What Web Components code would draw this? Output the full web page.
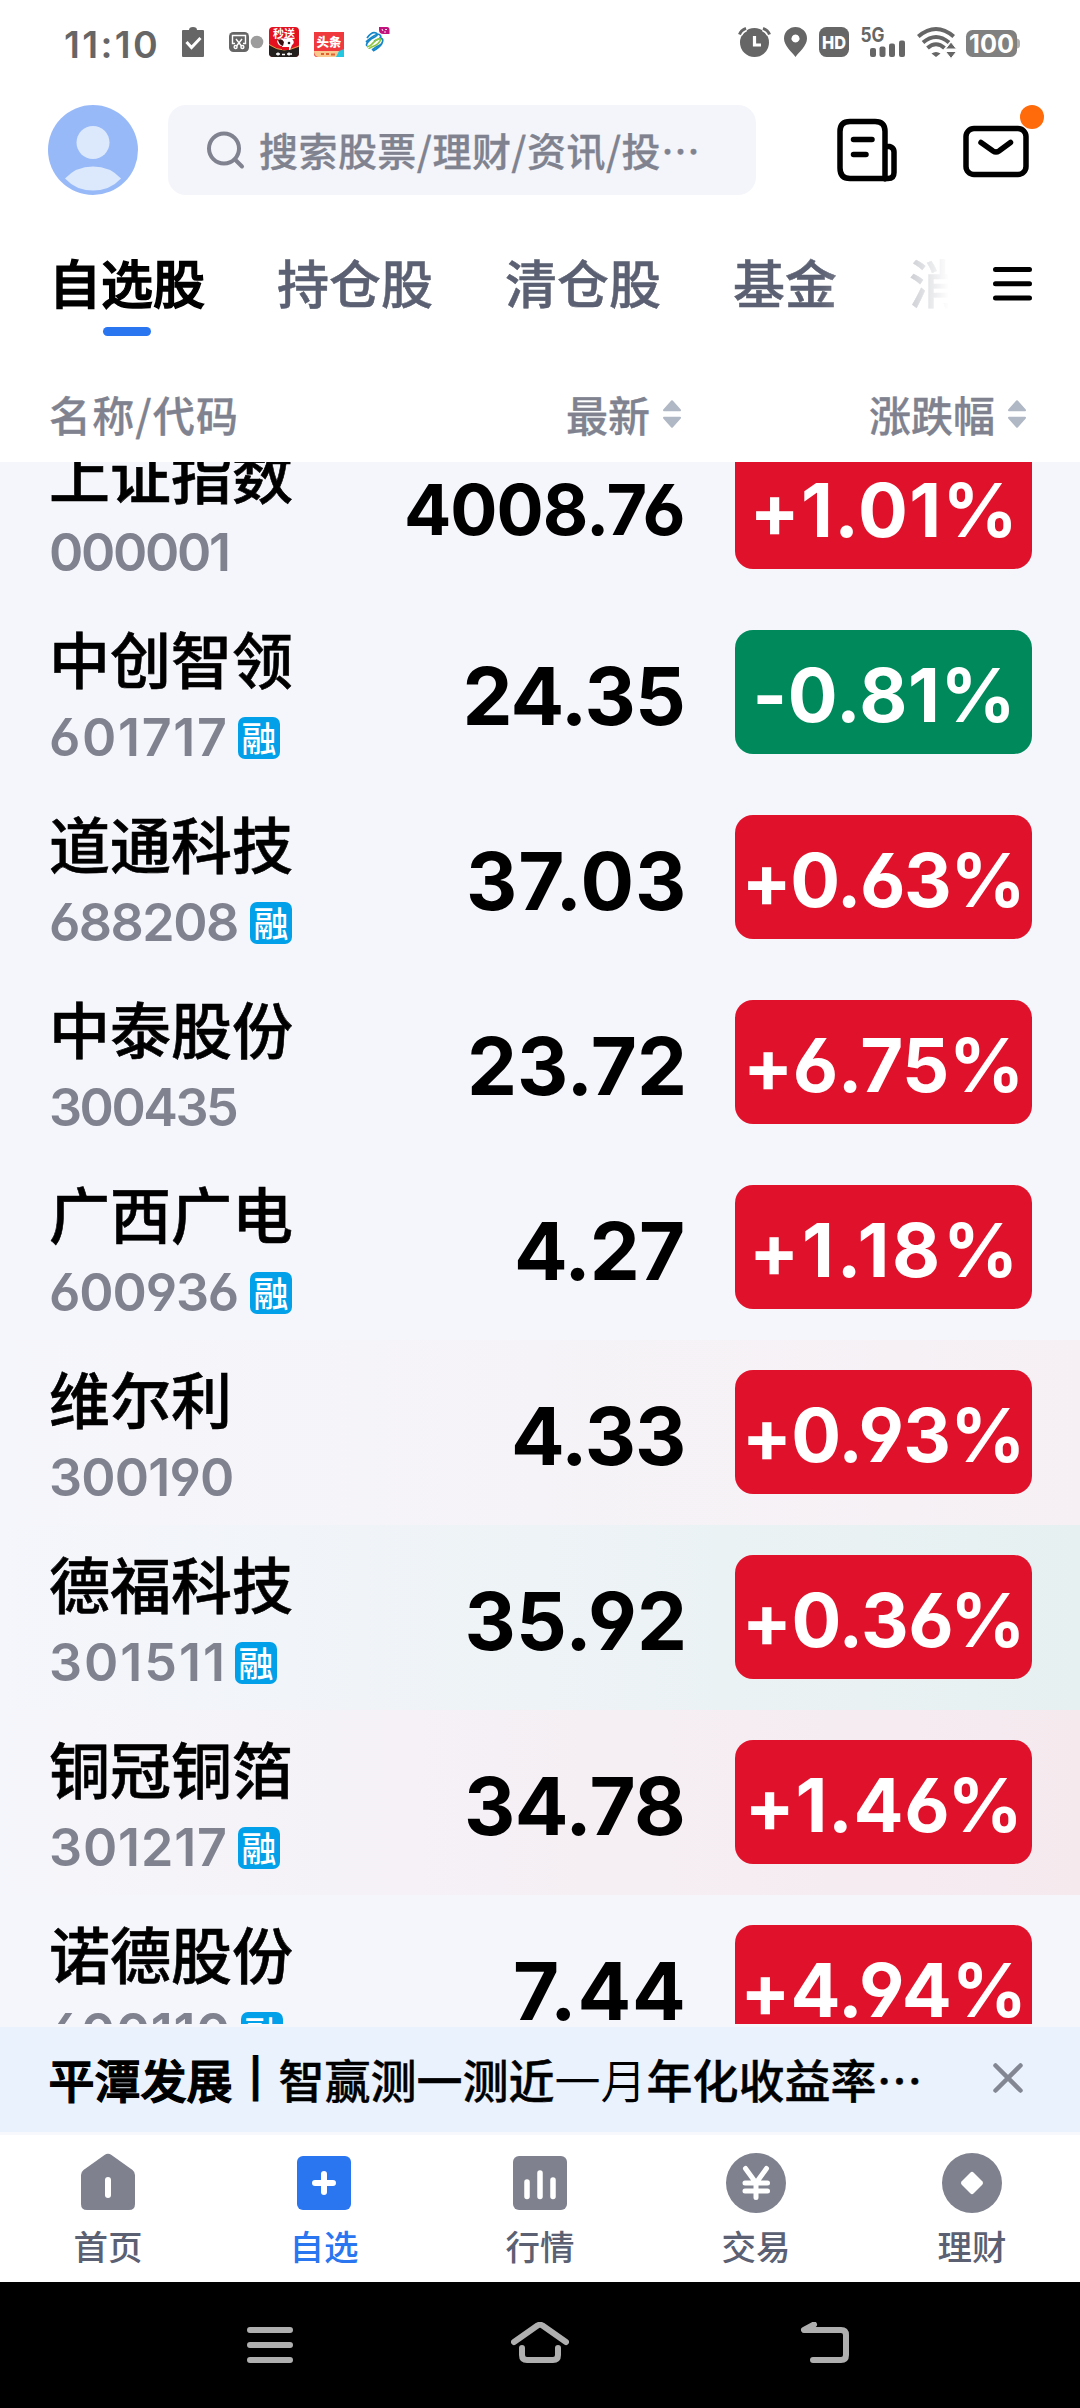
<!DOCTYPE html>
<html lang="zh-CN">
<head>
<meta charset="utf-8">
<title>自选股</title>
<style>
  html, body {
    margin: 0;
    background: #fff;
  }
  body {
    width: 1080px;
    height: 2408px;
    overflow: hidden;
    font-family: "Noto Sans CJK SC", Inter, sans-serif;
    --num: Inter, "Noto Sans CJK SC", sans-serif;
    --grey: #80838f;
    --slate: #5b6072;
    --blue: #2a75f0;
    --page: #f5f6fb;
  }
</style>
</head>
<body>
<stock-app></stock-app>

<script>
// Text whose visible glyphs span exactly `w` pixels: the spare room goes
// into letter-spacing and the side bearings are trimmed with margins.
class InkText extends HTMLElement {
  constructor () {
    super()
    this.attachShadow({ mode: 'open' }).innerHTML = `
      <style>
        :host { display: block; flex: none; white-space: nowrap; width: max-content; }
        span { display: block; width: max-content; }
      </style>
      <span><slot></slot></span>
    `
  }

  connectedCallback () {
    const text = this.textContent
    const span = this.shadowRoot.querySelector('span')
    const target = Number(this.getAttribute('w'))
    const cs = getComputedStyle(this)
    const ctx = document.createElement('canvas').getContext('2d')
    ctx.font = `${cs.fontWeight} ${cs.fontSize} ${cs.fontFamily}`
    const m = ctx.measureText(text)
    const left = -m.actualBoundingBoxLeft
    const right = m.width - m.actualBoundingBoxRight
    const ink = span.getBoundingClientRect().width - left - right
    const gap = (target - ink) / (text.length - 1)
    span.style.letterSpacing = gap + 'px'
    span.style.marginLeft = -left + 'px'
    span.style.marginRight = -(right + gap) + 'px'
  }
}
customElements.define('ink-text', InkText)

class StatusBar extends HTMLElement {
  connectedCallback () {
    this.attachShadow({ mode: 'open' }).innerHTML = `
      <style>
        :host {
          display: flex;
          justify-content: space-between;
          height: 30px;
          padding: 27px 60px 0 65px;
          color: #666;
          font-family: var(--num);
        }
        .side { display: flex; }
        svg { display: block; flex: none; overflow: visible; }
        .clock { font-size: 37.5px; font-weight: 600; line-height: 30px; padding-top: 2.5px; }
      </style>
      <div class="side">
        <ink-text class="clock" w="91">11:10</ink-text>
        <svg style="margin-left:26px" width="22" height="30" viewBox="0 0 22 30">
          <path fill="#666" d="M1 3h6q0-3 4-3t4 3h6q1 0 1 1v25q0 1-1 1H1q-1 0-1-1V4q0-1 1-1z"/>
          <path d="M4.500 15l5 5.500 9-9.500" fill="none" stroke="#fff" stroke-width="3"/>
        </svg>
        <svg style="margin-left:25px" width="35" height="30" viewBox="0 0 35 30">
          <rect y="5" width="20" height="20" rx="4.500" fill="#666"/>
          <g fill="none" stroke="#fff" stroke-width="1.400">
            <path d="M6 16.500H3.500V8.500H16.500V16.500H14"/>
            <path d="M7 12l5.500 7M13 12l-5.500 7"/>
            <circle cx="6.600" cy="20" r="1.500"/><circle cx="13.400" cy="20" r="1.500"/>
          </g>
          <circle cx="28" cy="15" r="6.300" fill="#9c9c9c"/>
        </svg>
        <svg style="margin-left:5px" width="30" height="30" viewBox="0 0 30 30">
          <clipPath id="jd"><rect width="30" height="30" rx="4"/></clipPath>
          <g clip-path="url(#jd)">
            <rect width="30" height="30" fill="#e3101f"/>
            <path d="M0 18q8 5 15 5t15-3v10H0z" fill="#231f1c"/>
            <path d="M0 17.500q8 5.500 15 5.500t15-4" fill="none" stroke="#d9a24c" stroke-width="1"/>
            <path d="M8 14q3-4 8-2q6-3 8 1q2 3-1 5l-2 5h-7l-1-4q-4 0-5-5z" fill="#fff"/>
            <path d="M9 13q4-2 6 2l-1 4q-4-1-5-6z" fill="#3a1012"/>
            <circle cx="20" cy="16" r="1.300" fill="#222"/>
            <path d="M13 20h7v3h-7z" fill="#e3101f"/>
            <path d="M7 27h4M13 27.500h3M18 27h5M9 25.500v3M20 25.500v3" stroke="#fff" stroke-width="1.500"/>
          </g>
          <text x="4" y="11" font-size="11" font-weight="700" fill="#fff">秒送</text>
        </svg>
        <svg style="margin-left:15px" width="30" height="30" viewBox="0 0 30 30">
          <path d="M0 5h30v22q0 3-3 3H3q-3 0-3-3z" fill="#f0393d"/>
          <path d="M0 24h27l-4 6H4q-4-1-4-6z" fill="#f9c88c"/>
          <path d="M25 24l5-2v8h-8z" fill="#22c6e0"/>
          <path d="M7 27h3M12 27h3M17 27.500h4" stroke="#e06030" stroke-width="2"/>
          <text x="2.500" y="20" font-size="12.500" font-weight="900" fill="#fff">头条</text>
        </svg>
        <svg style="margin-left:21px" width="25" height="30" viewBox="0 0 25 30">
          <g fill="none" stroke-width="1.700">
            <path d="M2 11Q7 4 11 6T6 12Q0 17 2 19" stroke="#1686c8"/>
            <path d="M1 15Q12 5 15 8T9 14" stroke="#1686c8"/>
            <path d="M2 20Q6 19 9 15T16 12Q14 17 9 19T4 22" stroke="#8cc63f"/>
            <path d="M16 11Q19 12 17 16T8 24" stroke="#1686c8"/>
            <path d="M17 17Q12 19 7 23" stroke="#1686c8"/>
          </g>
          <path d="M14 0h8q2.500 0 2.500 3v4h-6q-4.500 0-4.500-4z" fill="#c2127e"/>
          <path d="M17 2l1 2M20 2.500h2M19 5h2" stroke="#fff" stroke-width=".9"/>
        </svg>
      </div>
      <div class="side">
        <svg width="33" height="30" viewBox="0 0 33 30">
          <circle cx="16.500" cy="15.500" r="14.500" fill="#666"/>
          <path d="M1.500 7.500Q3 3 8 1.300M31.500 7.500Q30 3 25 1.300" stroke="#fff" stroke-width="6" fill="none"/>
          <path d="M1.500 7.500Q3 3 8 1.300M31.500 7.500Q30 3 25 1.300" stroke="#666" stroke-width="3" fill="none"/>
          <path d="M16.500 9v9h6.500" stroke="#fff" stroke-width="3.200" fill="none"/>
        </svg>
        <svg style="margin-left:12.500px" width="23" height="30" viewBox="0 0 23 30">
          <path fill="#666" fill-rule="evenodd" d="M11.500 0A11.500 11.500 0 0 1 23 11.500C23 19 15 25 11.500 30C8 25 0 19 0 11.500A11.500 11.500 0 0 1 11.500 0zM11.500 7.500a4 4 0 1 0 .01 0z"/>
        </svg>
        <svg style="margin-left:12.500px" width="30" height="30" viewBox="0 0 30 30">
          <rect width="30" height="30" rx="7.500" fill="#666"/>
          <text x="3" y="21.500" textLength="24" lengthAdjust="spacingAndGlyphs" font-size="18" font-weight="800" fill="#fff">HD</text>
        </svg>
        <svg style="margin-left:12px" width="44" height="30" viewBox="0 0 44 30">
          <text x="-.5" y="14.500" textLength="24" lengthAdjust="spacingAndGlyphs" font-size="20" font-weight="700" fill="#666">5G</text>
          <g fill="#666">
            <rect x="9" y="21" width="6" height="9" rx="2"/><rect x="18.500" y="19.500" width="6" height="10.500" rx="2"/>
            <rect x="28" y="16.500" width="6" height="13.500" rx="2"/><rect x="38" y="13.500" width="6" height="16.500" rx="2"/>
          </g>
        </svg>
        <svg style="margin-left:12px" width="39" height="30" viewBox="0 0 39 30">
          <g fill="none" stroke="#666" stroke-width="4">
            <path d="M1.300 9.500Q19 -5.500 36.700 9.500"/>
            <path d="M6 15.500Q19 4.500 32 15.500"/>
            <path d="M10.500 21Q19 13.500 27.500 21"/>
          </g>
          <path d="M14.500 26.500q4.500-3 9 0L19 30z" fill="#666"/>
          <path d="M34 15l5.500 7h-11zM34 31.500l5.500-7h-11z" fill="#666" stroke="#fff" stroke-width="1"/>
        </svg>
        <svg style="margin-left:10px" width="54" height="30" viewBox="0 0 54 30">
          <rect y="3" width="51" height="27" rx="6.500" fill="#808080"/>
          <path d="M51 11.500q3 .5 3 3.500v3q0 3-3 3.500z" fill="#b0b0b0"/>
          <text x="3" y="25.700" textLength="45" lengthAdjust="spacingAndGlyphs" font-size="25.500" font-weight="700" fill="#fff">100</text>
        </svg>
      </div>
    `
  }
}
customElements.define('status-bar', StatusBar)

class TopBar extends HTMLElement {
  connectedCallback () {
    this.attachShadow({ mode: 'open' }).innerHTML = `
      <style>
        :host {
          display: flex;
          align-items: center;
          height: 90px;
          padding: 48px 36px 0 48px;
        }
        svg { display: block; flex: none; overflow: visible; }
        .search {
          display: flex;
          align-items: center;
          box-sizing: border-box;
          width: 588px;
          height: 90px;
          margin: 0 81px 0 30px;
          padding-left: 39px;
          border-radius: 18px;
          background: #f4f5fa;
          color: var(--grey);
          font-size: 39px;
          font-weight: 500;
          line-height: 50px;
        }
        .search svg { margin-right: 16px; }
        .search ink-text { margin-top: -3px; -webkit-text-stroke: .3px; }
      </style>
      <svg width="90" height="90" viewBox="0 0 90 90">
        <circle cx="45" cy="45" r="45" fill="#98b9f8"/>
        <circle cx="45" cy="37.500" r="16.500" fill="#dce9fc"/>
        <path d="M17 73.500Q28 61.500 45 61.500T73 73.500Q62 85.500 45 85.500T17 73.500z" fill="#dce9fc"/>
      </svg>
      <div class="search">
        <svg width="37" height="38" viewBox="0 0 37 38">
          <circle cx="17" cy="17.500" r="15" fill="none" stroke="#80838f" stroke-width="4"/>
          <path d="M28 28.500l7 7" stroke="#80838f" stroke-width="4" stroke-linecap="round"/>
        </svg>
        <ink-text w="437">搜索股票/理财/资讯/投…</ink-text>
      </div>
      <svg width="60" height="64" viewBox="0 0 60 64" fill="none" stroke="#000" stroke-width="5.500" stroke-linecap="round">
        <path d="M48 61V13.500Q48 3.500 38 3.500H13Q3 3.500 3 13.500V50Q3 60.500 13 60.500H51Q57 60.500 57 54.500V34Q57 28 48 28"/>
        <path d="M16.500 21.500H35M16.500 36.500H29"/>
      </svg>
      <svg style="margin-left:66px" width="66" height="64" viewBox="0 0 66 64">
        <rect x="3" y="10.500" width="60" height="46" rx="8" fill="none" stroke="#000" stroke-width="5.500"/>
        <path d="M18 24.500L30 33Q33 35 36 33L47.500 24.500" fill="none" stroke="#000" stroke-width="5.500" stroke-linecap="round"/>
        <circle cx="69" cy="-1" r="12" fill="#ff6a0a"/>
      </svg>
    `
  }
}
customElements.define('top-bar', TopBar)

class TabStrip extends HTMLElement {
  connectedCallback () {
    const tabs = this.getAttribute('tabs').split(',')
    this.attachShadow({ mode: 'open' }).innerHTML = `
      <style>
        :host {
          display: flex;
          padding: 0 48px 0 49px;
          height: 144px;
        }
        .tabs {
          display: flex;
          gap: 72px;
          width: 899px;
          padding-top: 57px;
          overflow: hidden;
          color: var(--slate);
          font-size: 52px;
          font-weight: 500;
          line-height: 60px;
          white-space: nowrap;
          -webkit-text-stroke: .5px;
          -webkit-mask-image: linear-gradient(90deg, #000 770px, transparent 900px);
          mask-image: linear-gradient(90deg, #000 770px, transparent 900px);
        }
        .tab { display: flex; flex-direction: column; align-items: center; }
        .on { color: #000; -webkit-text-stroke: 1.5px; }
        .on::after {
          content: "";
          width: 48px;
          height: 9px;
          margin-top: 15px;
          border-radius: 5px;
          background: var(--blue);
        }
        svg { display: block; margin: 72px 0 0 45px; }
      </style>
      <div class="tabs">
        ${tabs.map((t, i) => `<div class="tab${i ? '' : ' on'}">${t}</div>`).join('')}
      </div>
      <svg width="39" height="34" viewBox="0 0 39 34" stroke="#000" stroke-width="5" stroke-linecap="round">
        <path d="M2.500 2.500H36.500M2.500 16.700H36.500M2.500 31H36.500"/>
      </svg>
    `
  }
}
customElements.define('tab-strip', TabStrip)

class ListHeader extends HTMLElement {
  connectedCallback () {
    const sort = `
      <svg width="18" height="28" viewBox="0 0 18 28" fill="#b0b8c5" stroke="#b0b8c5" stroke-width="2" stroke-linejoin="round">
        <path d="M9 1.200L17 10.200H1zM9 26.800L17 17.800H1z"/>
      </svg>`
    this.attachShadow({ mode: 'open' }).innerHTML = `
      <style>
        :host {
          display: flex;
          align-items: center;
          box-sizing: border-box;
          height: 123px;
          padding: 27px 54px 0 50px;
          color: var(--grey);
          font-size: 42px;
          font-weight: 500;
          line-height: 50px;
          -webkit-text-stroke: .3px;
        }
        .col { display: flex; align-items: center; gap: 14px; }
        ink-text { padding-bottom: 1px; }
        svg { display: block; }
        .price { margin-left: auto; }
        .rate { width: 345px; justify-content: flex-end; }
      </style>
      <ink-text w="186">名称/代码</ink-text>
      <div class="col price"><ink-text w="82">最新</ink-text>${sort}</div>
      <div class="col rate"><ink-text w="124">涨跌幅</ink-text>${sort}</div>
    `
  }
}
customElements.define('list-header', ListHeader)

class StockRow extends HTMLElement {
  connectedCallback () {
    const a = n => this.getAttribute(n)
    const rate = a('rate')
    this.attachShadow({ mode: 'open' }).innerHTML = `
      <style>
        :host {
          display: flex;
          flex: none;
          box-sizing: border-box;
          height: 185px;
          padding: 0 48px 0 49px;
        }
        :host([flash=rise]) { background: linear-gradient(90deg, transparent, #f5e9ee); }
        :host([flash=faint]) { background: linear-gradient(90deg, transparent, #f6f0f4); }
        :host([flash=fall]) { background: linear-gradient(90deg, transparent, #e6f0f1); }
        .name {
          height: 60px;
          padding-top: 28px;
          font-size: 61px;
          line-height: 60px;
          font-weight: 500;
          white-space: nowrap;
          -webkit-text-stroke: .6px;
        }
        .code {
          display: flex;
          align-items: center;
          gap: 13px;
          height: 42px;
          margin-top: 29px;
          padding-left: 2px;
          color: var(--grey);
          font: 600 52px/44px var(--num);
        }
        .tag {
          width: 42px;
          height: 42px;
          border-radius: 7px;
          background: #02a0e8;
          color: #fff;
          font: 500 35px/39px "Noto Sans CJK SC", sans-serif;
          text-align: center;
        }
        .price {
          margin-left: auto;
          padding-top: 56px;
          font: 650 79.500px/80px var(--num);
        }
        .long { padding-top: 55px; font-size: 70px; }
        .rate {
          display: flex;
          justify-content: center;
          width: 297px;
          height: 124px;
          margin: 30px 0 0 52px;
          border-radius: 18px;
          background: #e0122b;
          color: #fff;
          font: 650 74px/131px var(--num);
        }
        .down { background: #008a5c; }
        .price, .rate, .code { font-feature-settings: "cv03", "cv04", "ss08"; }
      </style>
      <div>
        <div class="name">${a('name')}</div>
        <div class="code">
          <ink-text w="${a('code-w')}">${a('code')}</ink-text>
          ${this.hasAttribute('margin') ? '<span class="tag">融</span>' : ''}
        </div>
      </div>
      <ink-text class="price ${a('price').length > 6 ? 'long' : ''}" w="${a('price-w')}">${a('price')}</ink-text>
      <div class="rate ${rate[0] === '-' ? 'down' : ''}"><ink-text w="${a('rate-w')}">${rate}</ink-text></div>
    `
  }
}
customElements.define('stock-row', StockRow)

class StockList extends HTMLElement {
  connectedCallback () {
    // The list is scrolled: its first row starts 47px above the edge.
    this.attachShadow({ mode: 'open' }).innerHTML = `
      <style>
        :host {
          display: flex;
          flex-direction: column;
          height: 1562px;
          overflow: hidden;
          border-bottom: 3px solid var(--page);
          background: var(--page);
        }
        ::slotted(:first-child) { margin-top: -47px; }
      </style>
      <slot></slot>
    `
  }
}
customElements.define('stock-list', StockList)

class NoticeBar extends HTMLElement {
  connectedCallback () {
    this.attachShadow({ mode: 'open' }).innerHTML = `
      <style>
        :host {
          display: flex;
          justify-content: space-between;
          align-items: center;
          height: 105px;
          padding: 0 56px 0 48.500px;
          border-bottom: 3px solid #f6f8fc;
          background: #eaf2fe;
          font-size: 46px;
          font-weight: 500;
          line-height: 60px;
          white-space: nowrap;
        }
        .text { display: flex; align-items: center; margin-top: -3px; -webkit-text-stroke: .4px; }
        b { font-weight: 500; -webkit-text-stroke: 1.4px; }
        .bar {
          width: 46px;
          text-align: center;
          font: 600 38px/56px var(--num);
          -webkit-text-stroke: 1px;
        }
        i { font-style: normal; font-weight: 350; -webkit-text-stroke: 0; }
        svg { display: block; margin-bottom: 4px; }
      </style>
      <div class="text"><b>平潭发展</b><span class="bar">|</span><span>智赢测一测近<i>一月</i>年化收益率…</span></div>
      <svg width="32" height="32" viewBox="0 0 32 32" stroke="#838793" stroke-width="4.500" stroke-linecap="round">
        <path d="M3.500 3.500l25 25M28.500 3.500l-25 25"/>
      </svg>
    `
  }
}
customElements.define('notice-bar', NoticeBar)

class NavItem extends HTMLElement {
  connectedCallback () {
    this.attachShadow({ mode: 'open' }).innerHTML = `
      <style>
        :host {
          display: flex;
          flex: 1;
          flex-direction: column;
          align-items: center;
          gap: 12px;
          padding-top: 18px;
          color: var(--slate);
          font-size: 34.500px;
          font-weight: 500;
          line-height: 40px;
        }
        :host([active]) { color: var(--blue); }
        ::slotted(svg) { display: block; }
      </style>
      <slot name="icon"></slot>
      <span><slot></slot></span>
    `
  }
}
customElements.define('nav-item', NavItem)

class BottomNav extends HTMLElement {
  connectedCallback () {
    this.attachShadow({ mode: 'open' }).innerHTML = `
      <style>
        :host { display: flex; height: 147px; background: #fff; }
      </style>
      <nav-item>
        <svg slot="icon" width="60" height="60" viewBox="0 0 60 60">
          <path d="M26.500 2Q30-.5 33.500 2L54.500 17Q57 19 57 22V51Q57 57 51 57H9Q3 57 3 51V22Q3 19 5.500 17z" fill="#7f828e"/>
          <path d="M30 27V42" stroke="#fff" stroke-width="6" stroke-linecap="round"/>
        </svg>首页</nav-item>
      <nav-item active>
        <svg slot="icon" width="60" height="60" viewBox="0 0 60 60">
          <rect x="3" y="3" width="54" height="54" rx="6" fill="#2a75f0"/>
          <path d="M30 21V39M21 30H39" stroke="#fff" stroke-width="6" stroke-linecap="round"/>
        </svg>自选</nav-item>
      <nav-item>
        <svg slot="icon" width="60" height="60" viewBox="0 0 60 60">
          <rect x="3" y="3" width="54" height="54" rx="6" fill="#7f828e"/>
          <path d="M17 29V43.500M30 20V43.500M43 27V43.500" stroke="#fff" stroke-width="5.500" stroke-linecap="round"/>
        </svg>行情</nav-item>
      <nav-item>
        <svg slot="icon" width="60" height="60" viewBox="0 0 60 60">
          <circle cx="30" cy="30" r="30" fill="#7f828e"/>
          <path d="M19.500 15.500L30 30L40.500 15.500M30 30V44.500M19 30H41.500M19 38H41.500" fill="none" stroke="#fff" stroke-width="5" stroke-linecap="round"/>
        </svg>交易</nav-item>
      <nav-item>
        <svg slot="icon" width="60" height="60" viewBox="0 0 60 60">
          <circle cx="30" cy="30" r="30" fill="#7f828e"/>
          <rect x="21.500" y="21.500" width="17" height="17" rx="2.500" transform="rotate(45 30 30)" fill="#fff"/>
        </svg>理财</nav-item>
    `
  }
}
customElements.define('bottom-nav', BottomNav)

class SystemNav extends HTMLElement {
  connectedCallback () {
    this.attachShadow({ mode: 'open' }).innerHTML = `
      <style>
        :host {
          display: flex;
          height: 86px;
          padding: 40px 0 0 247px;
          background: #000;
        }
        svg { display: block; fill: none; stroke: #afafaf; stroke-width: 6; stroke-linecap: round; stroke-linejoin: round; }
        .home { margin: 0 231px 0 218px; }
      </style>
      <svg width="46" height="41" viewBox="0 0 46 41"><path d="M3 8H43M3 23H43M3 38H43"/></svg>
      <svg class="home" width="58" height="41" viewBox="0 0 58 41">
        <path d="M3 20L26.500 3.500Q29 2 31.500 3.500L55 20M11 26V33Q11 38 16 38H42Q47 38 47 33V26"/>
      </svg>
      <svg width="49" height="41" viewBox="0 0 49 41"><path d="M14 2.500L4 8H41Q46 8 46 13V33Q46 38 41 38H13"/></svg>
    `
  }
}
customElements.define('system-nav', SystemNav)

class StockApp extends HTMLElement {
  connectedCallback () {
    this.attachShadow({ mode: 'open' }).innerHTML = `
      <style>
        :host { display: flex; flex-direction: column; width: 1080px; height: 2408px; color: #000; }
        status-bar, top-bar, tab-strip, list-header, stock-list, notice-bar, bottom-nav, system-nav { flex: none; }
      </style>
      <status-bar></status-bar>
      <top-bar></top-bar>
      <tab-strip tabs="自选股,持仓股,清仓股,基金,消"></tab-strip>
      <list-header></list-header>
      <stock-list>
        <stock-row name="上证指数" code="000001" code-w="177" price="4008.76" price-w="276" rate="+1.01%" rate-w="256"></stock-row>
        <stock-row name="中创智领" code="601717" code-w="174" margin price="24.35" price-w="216.500" rate="-0.81%" rate-w="252"></stock-row>
        <stock-row name="道通科技" code="688208" code-w="186" margin price="37.03" price-w="214" rate="+0.63%" rate-w="272"></stock-row>
        <stock-row name="中泰股份" code="300435" code-w="186" price="23.72" price-w="212" rate="+6.75%" rate-w="269"></stock-row>
        <stock-row name="广西广电" code="600936" code-w="186" margin price="4.27" price-w="166" rate="+1.18%" rate-w="257"></stock-row>
        <stock-row name="维尔利" code="300190" code-w="181" flash="faint" price="4.33" price-w="169" rate="+0.93%" rate-w="271.500"></stock-row>
        <stock-row name="德福科技" code="301511" code-w="171" margin flash="fall" price="35.92" price-w="215.500" rate="+0.36%" rate-w="271.500"></stock-row>
        <stock-row name="铜冠铜箔" code="301217" code-w="174" margin flash="rise" price="34.78" price-w="216" rate="+1.46%" rate-w="266"></stock-row>
        <stock-row name="诺德股份" code="600110" code-w="177" margin price="7.44" price-w="168" rate="+4.94%" rate-w="274.500"></stock-row>
      </stock-list>
      <notice-bar></notice-bar>
      <bottom-nav></bottom-nav>
      <system-nav></system-nav>
    `
  }
}
customElements.define('stock-app', StockApp)
</script>
</body>
</html>
